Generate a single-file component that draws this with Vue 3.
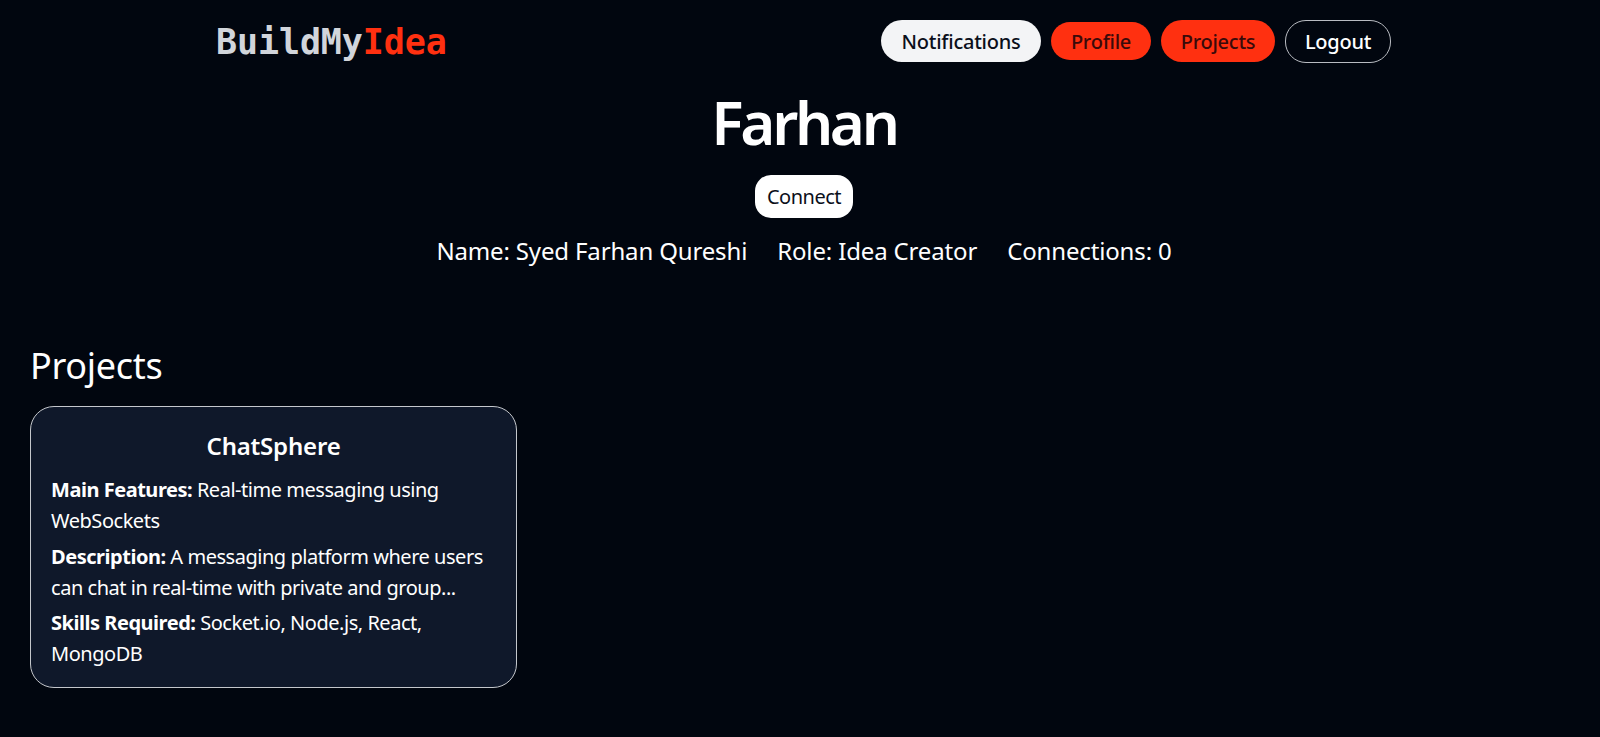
<template>
  <div class="page">
    <header class="nav">
      <div class="logo">BuildMy<span class="accent">Idea</span></div>
      <nav class="links">
        <button class="btn light">Notifications</button>
        <button class="btn red small">Profile</button>
        <button class="btn red">Projects</button>
        <button class="btn outline">Logout</button>
      </nav>
    </header>
    <section class="profile">
      <h1>Farhan</h1>
      <button class="connect">Connect</button>
      <div class="info">
        <span>Name: Syed Farhan Qureshi</span>
        <span>Role: Idea Creator</span>
        <span>Connections: 0</span>
      </div>
    </section>
    <section class="projects">
      <h2>Projects</h2>
      <article class="card">
        <h3>ChatSphere</h3>
        <p><b>Main Features:</b> Real-time messaging using WebSockets</p>
        <p><b>Description:</b> A messaging platform where users can chat in real-time with private and group...</p>
        <p><b>Skills Required:</b> Socket.io, Node.js, React, MongoDB</p>
      </article>
    </section>
  </div>
</template>

<script setup>
</script>

<style>
html, body { margin: 0; background: #01060f; }
</style>

<style scoped>
.page {
  min-height: 737px;
  background: #01060f;
  color: #fff;
  font-family: "Noto Sans", "Open Sans", sans-serif;
  box-sizing: border-box;
  overflow: hidden;
}
.nav {
  display: flex;
  justify-content: space-between;
  align-items: center;
  height: 82px;
  padding: 0 209px 0 216px;
}
.logo {
  font-family: "DejaVu Sans Mono", "Liberation Mono", monospace;
  font-weight: 700;
  font-size: 35px;
  letter-spacing: -0.1px;
  color: #d1d5db;
  padding-top: 2px;
}
.accent { color: #ff3010; }
.links { display: flex; align-items: center; gap: 10px; }
.btn {
  font-family: inherit;
  font-size: 20px;
  letter-spacing: -0.25px;
  font-weight: 500;
  height: 42px;
  border-radius: 21px;
  border: none;
  padding: 0;
  box-sizing: border-box;
  color: #0b0f1a;
}
.light { width: 160px; background: #f3f4f6; }
.red { width: 114px; background: #ff3010; color: #3a0a0a; }
.small { width: 100px; height: 38px; }
.outline { width: 106px; height: 43px; background: transparent; border: 1px solid #b9bcc2; color: #fff; }
.profile { display: flex; flex-direction: column; align-items: center; padding-left: 8px; }
h1 {
  margin: 0;
  font-size: 60px;
  line-height: 80px;
  font-weight: 600;
  letter-spacing: -3.3px;
}
.connect {
  margin-top: 13px;
  width: 98px;
  height: 43px;
  border: none;
  border-radius: 16px;
  background: #fff;
  color: #0b0f1a;
  font-family: inherit;
  font-size: 20px;
  letter-spacing: -0.5px;
  padding: 0;
}
.info {
  margin-top: 16px;
  display: flex;
  gap: 30px;
  font-size: 24px;
  line-height: 34px;
  letter-spacing: -0.15px;
}
.projects { padding: 0 30px; margin-top: 73px; }
h2 {
  margin: 0;
  font-size: 36px;
  line-height: 50px;
  font-weight: 400;
  letter-spacing: -0.3px;
}
.card {
  margin-top: 15px;
  width: 487px;
  height: 282px;
  box-sizing: border-box;
  background: #0f182a;
  border: 1px solid #c4c7cc;
  border-radius: 24px;
  padding: 21px 20px 20px;
}
h3 {
  margin: 0 0 10px;
  text-align: center;
  font-size: 24px;
  line-height: 36px;
  font-weight: 600;
  letter-spacing: -0.2px;
}
p {
  margin: 0 0 4.5px;
  font-size: 20px;
  line-height: 31px;
  letter-spacing: -0.47px;
}
</style>
